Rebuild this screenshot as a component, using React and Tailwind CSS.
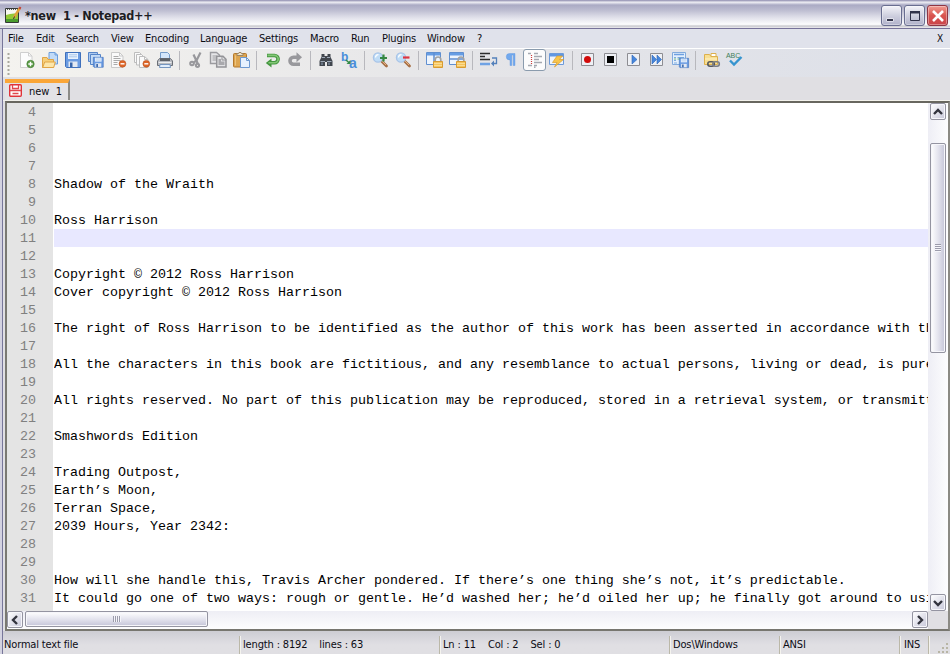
import clsx from "clsx";

const MENU = [
  { label: "File", width: "w-[16px]" },
  { label: "Edit", width: "w-[18px]" },
  { label: "Search", width: "w-[33px]" },
  { label: "View", width: "w-[22px]" },
  { label: "Encoding", width: "w-[43px]" },
  { label: "Language", width: "w-[47px]" },
  { label: "Settings", width: "w-[39px]" },
  { label: "Macro", width: "w-[29px]" },
  { label: "Run", width: "w-[19px]" },
  { label: "Plugins", width: "w-[33px]" },
  { label: "Window", width: "w-[38px]" },
  { label: "?", width: "w-[8px]" },
];

const FIRST_LINE = 4;
const CURRENT_LINE = 11;

const LINES = [
  "",
  "",
  "",
  "",
  "Shadow of the Wraith",
  "",
  "Ross Harrison",
  "",
  "",
  "Copyright © 2012 Ross Harrison",
  "Cover copyright © 2012 Ross Harrison",
  "",
  "The right of Ross Harrison to be identified as the author of this work has been asserted in accordance with th",
  "",
  "All the characters in this book are fictitious, and any resemblance to actual persons, living or dead, is pure",
  "",
  "All rights reserved. No part of this publication may be reproduced, stored in a retrieval system, or transmitt",
  "",
  "Smashwords Edition",
  "",
  "Trading Outpost,",
  "Earth’s Moon,",
  "Terran Space,",
  "2039 Hours, Year 2342:",
  "",
  "",
  "How will she handle this, Travis Archer pondered. If there’s one thing she’s not, it’s predictable.",
  "It could go one of two ways: rough or gentle. He’d washed her; he’d oiled her up; he finally got around to usi",
];

function Svg({ children, className }) {
  return (
    <svg viewBox="0 0 16 16" width="16" height="16" fill="none" className={clsx("block shrink-0 overflow-visible", className)}>
      {children}
    </svg>
  );
}

function Minus({ x, y }) {
  return (
    <>
      <circle cx={x} cy={y} r="3.4" fill="#dd6426" stroke="#b9501c" strokeWidth=".6" />
      <path d={`M${x - 2} ${y}h4`} stroke="#fff" strokeWidth="1.4" />
    </>
  );
}

function Floppy({ x = 0, y = 0, s = 1 }) {
  return (
    <g transform={`translate(${x} ${y}) scale(${s})`}>
      <path d="M.5 .5h15v15h-14l-1-1z" fill="#6b9ce2" stroke="#3f70bb" />
      <path d="M3 1h10v6H3z" fill="#e9f2fd" />
      <path d="M4 2.8h8M4 4.8h8" stroke="#a9c6ea" />
      <path d="M3.5 9.5h9V15h-9z" fill="#e3e9f2" />
      <path d="M5 10.5h2.5V15H5z" fill="#3765ab" />
    </g>
  );
}

function Lock() {
  return (
    <>
      <path d="M8.2 10V7.8a2.8 2.8 0 0 1 5.6 0V10" stroke="#a2a2a2" strokeWidth="1.7" />
      <path d="M6.5 9.5h9v6h-9z" fill="#f5c45c" stroke="#d79b32" />
      <path d="M7 11.5h8M7 13.5h8" stroke="#fbdc92" />
    </>
  );
}

function Magnifier() {
  return (
    <>
      <path d="M8.7 9.2l4.8 4.8" stroke="#a76f45" strokeWidth="2.8" strokeLinecap="round" />
      <path d="M9 9l4 4" stroke="#e3b184" strokeWidth="1" />
      <circle cx="5" cy="5.5" r="4.6" fill="#bfdcf6" stroke="#a8c4e8" strokeWidth="1.3" />
      <path d="M2.5 5.5a3 3 0 0 1 3-2.8" stroke="#fff" strokeWidth="1.2" />
    </>
  );
}

function MacroBox({ children }) {
  return (
    <Svg>
      <g transform="translate(-1 -1)">
        <path d="M1.5 2.5h12v12h-12z" fill="#eef0f5" stroke="#8d8d92" />
        {children}
      </g>
    </Svg>
  );
}

function NewIcon() {
  return (
    <Svg>
      <path d="M1.5 .5h8L13 4v11.5H1.5z" fill="#fcfcfc" stroke="#cfcfcf" />
      <path d="M9.5 .5V4H13" stroke="#cfcfcf" />
      <circle cx="11.5" cy="12" r="3.7" fill="#5c9b48" stroke="#3e7a2d" strokeWidth=".6" />
      <path d="M9.3 12h4.4M11.5 9.8v4.4" stroke="#fff" strokeWidth="1.4" />
    </Svg>
  );
}

function OpenIcon() {
  return (
    <Svg>
      <path d="M7 .5h6L15.5 3v9H7z" fill="#c1dbf8" stroke="#6b9ddb" />
      <path d="M13 .5V3h2.5" stroke="#6b9ddb" />
      <path d="M.5 5.5H5l1 2h5.5v8H.5z" fill="#f6cf79" stroke="#e0a546" />
      <path d="M.7 15.5L2.7 10h10.6l-1.6 5.5z" fill="#fce6aa" stroke="#e0a546" />
    </Svg>
  );
}

function SaveAllIcon() {
  return (
    <Svg>
      <path d="M.5 .5h9v9h-9z" fill="#acc9ee" stroke="#5685c8" />
      <path d="M2.5 2.5h10v10h-10z" fill="#c5dcf6" stroke="#5685c8" />
      <Floppy x={5} y={5} s={0.66} />
    </Svg>
  );
}

function CloseIcon() {
  return (
    <Svg>
      <path d="M.5 .5h8L12 4v11.5H.5z" fill="#fafafa" stroke="#c9c9c9" />
      <path d="M8.5 .5V4H12" stroke="#c9c9c9" />
      <path d="M2.5 4.5h5M2.5 6.5h7M2.5 8.5h7M2.5 10.5h4M2.5 12.5h4" stroke="#aaa" />
      <Minus x={11.5} y={11.8} />
    </Svg>
  );
}

function CloseAllIcon() {
  return (
    <Svg>
      <path d="M.5 .5h5L8 3v7.5H.5z" fill="#fafafa" stroke="#bdbdbd" />
      <path d="M2.5 2.5h5L10 5v8H2.5z" fill="#fafafa" stroke="#bdbdbd" />
      <path d="M5.5 4.5h5l3.5 3v8H5.5z" fill="#fafafa" stroke="#bdbdbd" />
      <path d="M10.5 4.5v3H14" stroke="#bdbdbd" />
      <Minus x={12.3} y={11.8} />
    </Svg>
  );
}

function PrintIcon() {
  return (
    <Svg>
      <path d="M3.5 7.5v-7h7l2 2v5" fill="#d4e6fb" stroke="#759bc9" />
      <path d="M2.5 6.5h11l2 2.5v4.5H.5V9z" fill="#b9bcc2" stroke="#6b6f76" />
      <path d="M3 6.5h10V9H3z" fill="#5d6168" />
      <path d="M1.5 10.5h13" stroke="#eceef0" />
      <path d="M3 12.5h10l.5 3h-11z" fill="#e0edfc" stroke="#7595bf" />
    </Svg>
  );
}

function CutIcon() {
  return (
    <Svg>
      <path d="M5.5 2.5L9 10M12.5 .5L8 9.5" stroke="#98989c" strokeWidth="2.2" />
      <path d="M8 8.5L5.5 11M8.5 9l1.5 3" stroke="#98989c" strokeWidth="2.2" />
      <circle cx="4" cy="11.5" r="1.8" stroke="#98989c" strokeWidth="2" />
      <circle cx="9.5" cy="13.3" r="1.6" stroke="#98989c" strokeWidth="2" />
    </Svg>
  );
}

function CopyIcon() {
  return (
    <Svg>
      <path d="M-.5 .5h6L8.500 3v8.500h-9z" fill="#e6e6e8" stroke="#9b9b9f" strokeWidth="1.4" />
      <path d="M1.5 4h4M1.5 6h4M1.5 8h4" stroke="#9b9b9f" />
      <path d="M5.7 4.2H12l3 3v7.8H5.7z" fill="#e2e2e4" stroke="#949498" strokeWidth="1.5" />
      <path d="M11 4.500V8h4" stroke="#949498" />
      <path d="M7.5 7h2.500v2.500h3.500V13h-6z" fill="#a9a9ad" />
    </Svg>
  );
}

function PasteIcon() {
  return (
    <Svg>
      <rect x="-.5" y="1.5" width="13" height="13.5" rx="1" fill="#dda550" stroke="#b4782c" />
      <path d="M1.5 3.5v10" stroke="#edc47e" />
      <path d="M3 3.5v-2h1.500l.5-1h2l.5 1H9v2z" fill="#eee3cc" stroke="#9e8560" />
      <path d="M6.5 5.5h6l3 3v7h-9z" fill="#e6f1fe" stroke="#6c98d0" />
      <path d="M12.5 5.5v3h3" stroke="#6c98d0" />
    </Svg>
  );
}

function UndoIcon() {
  return (
    <Svg>
      <path d="M2 3.5h7.5a3.6 3.6 0 0 1 0 7.200H6" stroke="#43963e" strokeWidth="3.6" />
      <path d="M6.5 6.500v9L.8 11z" fill="#43963e" />
      <path d="M2.5 3.4h7a3.7 3.7 0 0 1 0 7.400H3.500" stroke="#83c777" strokeWidth="1.6" />
    </Svg>
  );
}

function RedoIcon() {
  return (
    <Svg>
      <path d="M10.500 5.300H5.500a3.500 3.500 0 0 0 0 7H12" stroke="#98989c" strokeWidth="3.600" />
      <path d="M8.500 .3v10l5.500-5z" fill="#98989c" />
    </Svg>
  );
}

function FindIcon() {
  return (
    <Svg>
      <g transform="translate(-.5 0)">
        <path d="M3 2h3v2h3V2h3v3l2 4v5H8.500v-4h-2v4H1V9l2-4z" fill="#41464e" />
        <path d="M2 9.500h4.500M8.500 9.500H13M3.500 5.500h3M8.500 5.500h3" stroke="#9faab8" />
        <path d="M3.500 10.500V13M10.500 10.500V13" stroke="#788596" strokeWidth="1.5" />
      </g>
    </Svg>
  );
}

function ReplaceIcon() {
  return (
    <Svg>
      <text x="-1" y="9" fill="#4a8edb" fontSize="12" fontWeight="bold" fontFamily="Liberation Sans, sans-serif">
        b
      </text>
      <text x="7" y="15.5" fill="#4a8edb" fontSize="14" fontWeight="bold" fontFamily="Liberation Sans, sans-serif">
        a
      </text>
      <path d="M4 8l4 3.5" stroke="#348a48" strokeWidth="1.5" />
      <path d="M8.5 8v4h-4z" fill="#348a48" />
    </Svg>
  );
}

function SyncIcon({ vertical }) {
  return (
    <Svg>
      <path d="M-.5 .5h14v12h-14z" fill="#edf4fd" stroke="#608fd0" />
      <path d="M0 1h13v2.500H0z" fill="#669de4" />
      {vertical ? (
        <path d="M7 1v11" stroke="#608fd0" strokeWidth="1.5" />
      ) : (
        <path d="M0 7h13" stroke="#608fd0" strokeWidth="1.5" />
      )}
      <Lock />
    </Svg>
  );
}

function WrapIcon() {
  return (
    <Svg>
      <path d="M-1 1.500h10M-1 4.500h5M-1 7.500h10" stroke="#2d2d2d" strokeWidth="1.4" />
      <path d="M-1 12h10" stroke="#6fa2e4" strokeWidth="2.500" />
      <path d="M11 6h4.500v5.500H12" stroke="#5481bb" strokeWidth="1.300" />
      <path d="M13 8.500v6l-3-3z" fill="#5481bb" />
    </Svg>
  );
}

function PilcrowIcon() {
  return (
    <Svg>
      <path d="M11 1.500H5.500a3 3 0 0 0 0 6.400H6v5.600h1.800V3h1.400v10.500H11z" fill="#72a9ee" stroke="#5b94dd" strokeWidth=".4" />
    </Svg>
  );
}

function IndentIcon() {
  return (
    <Svg>
      <path
        d="M0 1.500h3M6 1.500h4M6 4.500h8M6 7.500h5M6 10.500h8M0 13.500h4M6 13.500h3M6 15.300h1.500"
        stroke="#a5a9b1"
        strokeWidth="1.4"
      />
      <path d="M3.500 3v9" stroke="#cc3c3c" strokeWidth="1.2" strokeDasharray="1 1" />
    </Svg>
  );
}

function LightningIcon() {
  return (
    <Svg>
      <path d="M-.5 1.500h14v11h-14z" fill="#eef4fc" stroke="#6c9ada" />
      <path d="M0 2h13v2.500H0z" fill="#6097e2" />
      <path d="M7 4h5.500L9.500 7.500h4L4.500 15l2.500-4.500H2.500z" fill="#f8c54b" stroke="#d99b2c" strokeWidth=".7" />
    </Svg>
  );
}

function SaveMacroIcon() {
  return (
    <Svg>
      <path d="M-.5 .5h13v12h-13z" fill="#e4effc" stroke="#82aadc" />
      <path d="M1 2.500h10" stroke="#6e9fe0" strokeWidth="1.500" />
      <path d="M1 5.500h2M4.500 5.500H11M1 8.500h2M1 11h3" stroke="#7eabdf" />
      <path d="M1 7h2M4.500 7H9" stroke="#78ba7d" />
      <Floppy x={6} y={6} s={0.62} />
    </Svg>
  );
}

function FolderLinkIcon() {
  return (
    <Svg>
      <path d="M.5 2.500h5l1.500 2h6.500v8H.5z" fill="#f8df93" stroke="#ddb04c" />
      <path d="M7 1.500h5v3H7z" fill="#fff" stroke="#ddb04c" />
      <path d="M1 7h12" stroke="#fff2c4" />
      <rect x="3.8" y="9.800" width="6.5" height="4.400" rx="2.200" stroke="#55585d" strokeWidth="1.600" />
      <rect x="8.8" y="9.800" width="6.5" height="4.400" rx="2.200" stroke="#7b7e83" strokeWidth="1.600" />
    </Svg>
  );
}

function SpellIcon() {
  return (
    <Svg>
      <text x="-1" y="5.500" fill="#3f7f59" fontSize="7" fontFamily="Liberation Sans, sans-serif" textLength="14">
        ABC
      </text>
      <path d="M3 8.500l4 4 7.500-7.500" stroke="#3694cf" strokeWidth="2.400" />
    </Svg>
  );
}

const TOOLBAR = [
  [<NewIcon />, <OpenIcon />, <Svg><Floppy /></Svg>, <SaveAllIcon />, <CloseIcon />, <CloseAllIcon />, <PrintIcon />],
  [<CutIcon />, <CopyIcon />, <PasteIcon />],
  [<UndoIcon />, <RedoIcon />],
  [<FindIcon />, <ReplaceIcon />],
  [
    <Svg>
      <Magnifier />
      <path d="M7 6h7M10.500 2.500v7" stroke="#368843" strokeWidth="2.200" />
    </Svg>,
    <Svg>
      <Magnifier />
      <path d="M7 5.500h6.500" stroke="#dd3341" strokeWidth="2.200" />
    </Svg>,
  ],
  [<SyncIcon vertical />, <SyncIcon />],
  [<WrapIcon />, <PilcrowIcon />, <IndentIcon />, <LightningIcon />],
  [
    <MacroBox><circle cx="7.5" cy="8.5" r="3.5" fill="#d10a0a" /></MacroBox>,
    <MacroBox><path d="M4 5h7v7H4z" fill="#000" /></MacroBox>,
    <MacroBox><path d="M6 4l5 4.500L6 13z" fill="#4686dc" stroke="#2b65b7" strokeWidth=".6" /></MacroBox>,
    <MacroBox><path d="M3 4l4.500 4.500L3 13zM8 4l4.500 4.500L8 13z" fill="#4686dc" stroke="#2b65b7" strokeWidth=".6" /></MacroBox>,
    <SaveMacroIcon />,
  ],
  [<FolderLinkIcon />, <SpellIcon />],
];

// index of the pressed toggle inside its toolbar group
const PRESSED = { group: 6, item: 2 };

function WindowButton({ close, children }) {
  return (
    <div
      className={clsx(
        "flex h-[21px] w-[21px] items-center justify-center rounded-[3px] border shadow-[inset_0_0_0_1px_rgba(255,255,255,0.35)]",
        close
          ? "border-[#8f3643] bg-linear-to-b from-[#ef9a91] via-[#d9544f] to-[#c9444a]"
          : "border-[#696e90] bg-linear-to-b from-[#f4f4f9] via-[#cfd0df] to-[#b0b1ca]"
      )}
    >
      {children}
    </div>
  );
}

function TitleBar() {
  return (
    <div className="flex h-[29px] shrink-0 items-center border-b border-[#77739a] bg-[linear-gradient(180deg,#9a98b8_0px,#aaa9c2_1px,#f0f0f5_2px,#dddde8_3px,#aaaac4_5px,#bcbcd0_10px,#dedee8_17px,#fbfbfd_24px,#f5f5f7_25px,#bdbdc3_26px,#e4e3e8_27px,#e4e3e8_28px)] pt-[3px] pr-[2px] pl-[5px]">
      <Svg className="mb-[2px]">
        <path d="M.5 1.500h13v14H.5z" fill="#f7f8f1" stroke="#343936" />
        <path d="M1 8l4-1 8-1v9H1z" fill="#92c936" />
        <path d="M1 12h12v3H1z" fill="#4b9c2e" />
        <path d="M2 2.500h11" stroke="#555" strokeDasharray="1 1" />
        <path d="M14.800 1L9 10.500" stroke="#e0a23a" strokeWidth="2.400" />
        <path d="M15.500 0l-1 2" stroke="#c44038" strokeWidth="2" />
        <path d="M9.500 9.500l-1 2.500" stroke="#333" />
      </Svg>
      <span className="ml-[4px] w-[300px] font-['DejaVu_Sans_Condensed','DejaVu_Sans',sans-serif] text-[12.5px] font-bold tracking-[-0.28px] whitespace-pre text-[#1d1d24]">
        *new  1 - Notepad++
      </span>
      <div className="ml-auto flex gap-[2px]">
        <WindowButton>
          <Svg>
            <path d="M2.500 10.500h7v3h-7z" fill="#fff" />
            <path d="M3 11h6v2H3z" fill="#34364c" />
          </Svg>
        </WindowButton>
        <WindowButton>
          <Svg>
            <path d="M3.500 3.500h9v9h-9z" stroke="#30324a" />
            <path d="M3 3h10v2.500H3z" fill="#30324a" />
          </Svg>
        </WindowButton>
        <WindowButton close>
          <Svg>
            <path d="M3 3l10 10M13 3L3 13" stroke="#fff" strokeWidth="2.600" />
          </Svg>
        </WindowButton>
      </div>
    </div>
  );
}

function MenuBar() {
  return (
    <div className="flex h-[19px] shrink-0 items-center gap-[12px] bg-[#e0e2eb] pr-[7px] pl-[5px]">
      {MENU.map((m) => (
        <span key={m.label} className={clsx("whitespace-nowrap", m.width)}>
          {m.label}
        </span>
      ))}
      <span className="ml-auto text-[10px]">X</span>
    </div>
  );
}

function Toolbar() {
  return (
    <div className="flex h-[29px] shrink-0 items-center border-t border-white bg-linear-to-r from-[#f4f3ef] via-[#e5e5e8] to-[#dde0e9] pb-[6px] pl-[4px]">
      <svg width="8" height="24" className="mt-[6px] block shrink-0">
        <path d="M1.500 2v22" stroke="#a9a89e" strokeWidth="2" strokeDasharray="2 2" />
      </svg>
      {TOOLBAR.map((group, g) => (
        <div key={g} className="flex items-center">
          {g > 0 && (
            <div className="flex w-2 pl-[3px]">
              <div className="h-[19px] w-px bg-[#b8b8bd]" />
            </div>
          )}
          {group.map((icon, i) => (
            <div
              key={i}
              className={clsx(
                "flex h-[22px] w-[23px] items-center",
                g === PRESSED.group && i === PRESSED.item
                  ? "rounded-[3px] border border-[#8a9bad] bg-[#fcfcfc] pl-[4px]"
                  : "pl-[4px]"
              )}
            >
              {icon}
            </div>
          ))}
        </div>
      ))}
    </div>
  );
}

function TabBar() {
  return (
    <div className="flex h-[24px] shrink-0 items-end border-b border-[#f3f2ec] bg-[#e0dfe3] pl-[2px]">
      <div className="flex h-[21px] w-[65px] items-center border-t-[4px] border-r-2 border-t-[#faa638] border-r-[#8c8b88] bg-[#e3e2e6] pl-[4px]">
        <svg width="13" height="13" viewBox="0 0 13 13" className="mb-[2px] block shrink-0">
          <rect x=".7" y=".7" width="11.6" height="11.6" rx="1" fill="#fff" stroke="#e0333a" strokeWidth="1.4" />
          <path d="M3.500 1v3.500h6V1M1 6.500h11M3.500 9.500h6" fill="none" stroke="#e0474d" strokeWidth="1.300" />
        </svg>
        <span className="ml-[7px] tracking-normal whitespace-pre">new  1</span>
      </div>
    </div>
  );
}

function Arrow({ d }) {
  return (
    <svg width="10" height="10" viewBox="0 0 10 10" className="block shrink-0">
      <path d={d} fill="none" stroke="#33343e" strokeWidth="2.400" />
    </svg>
  );
}

const SCROLL_BUTTON =
  "flex h-[17px] w-[16px] shrink-0 items-center justify-center rounded-[2px] border border-[#9494a1] bg-linear-to-br from-white to-[#c8c8da] shadow-[inset_0_0_0_1px_#f6f6fa]";

function Editor() {
  return (
    <div className="ml-[2px] flex h-[530px] shrink-0 flex-col border-2 border-t-[#68675f] border-r-[#8b8a84] border-b-[#77766f] border-l-[#7a7972] bg-white">
      <div className="flex h-[508px] shrink-0">
        <div className="min-w-0 flex-1 overflow-hidden font-['Liberation_Mono',monospace] text-[13.333px] leading-[18px] tracking-normal">
          {LINES.map((text, i) => {
            const n = FIRST_LINE + i;
            return (
              <div key={n} className="flex h-[18px]">
                <div className="h-[18px] w-[46px] shrink-0 bg-[#e4e4e4] pt-px pr-[17px] text-right text-[#808080]">{n}</div>
                <div
                  className={clsx(
                    "ml-px min-w-0 flex-1 overflow-hidden pt-px whitespace-pre text-black",
                    n === CURRENT_LINE && "bg-[#e8e8ff]"
                  )}
                >
                  {text}
                </div>
              </div>
            );
          })}
          <div className="h-[4px] w-[46px] bg-[#e4e4e4]" />
        </div>
        <div className="flex w-[20px] shrink-0 flex-col items-end bg-linear-to-r from-[#eeeef5] to-[#fdfdfe] pr-[2px]">
          <div className={SCROLL_BUTTON}>
            <Arrow d="M1 7l4-4 4 4" />
          </div>
          <div className="mt-[23px] flex h-[210px] w-[16px] items-center justify-center rounded-[2px] border border-[#9494a1] bg-linear-to-r from-white via-[#e4e4ee] to-[#c5c5d8] shadow-[inset_0_0_0_1px_#f6f6fa]">
            <div className="h-[8px] w-[6px] bg-[repeating-linear-gradient(180deg,#9c9cac_0px,#9c9cac_1px,#f5f5fa_1px,#f5f5fa_2px)]" />
          </div>
          <div className={clsx(SCROLL_BUTTON, "mt-auto")}>
            <Arrow d="M1 3l4 4 4-4" />
          </div>
        </div>
      </div>
      <div className="flex h-[18px] shrink-0 items-start bg-linear-to-b from-[#eeeef5] to-[#fdfdfe]">
        <div className={SCROLL_BUTTON}>
          <Arrow d="M7 1L3 5l4 4" />
        </div>
        <div className="ml-[2px] flex h-[16px] w-[183px] items-center justify-center rounded-[2px] border border-[#9494a1] bg-linear-to-b from-white via-[#e4e4ee] to-[#c5c5d8] shadow-[inset_0_0_0_1px_#f6f6fa]">
          <div className="h-[6px] w-[8px] bg-[repeating-linear-gradient(90deg,#9c9cac_0px,#9c9cac_1px,#f5f5fa_1px,#f5f5fa_2px)]" />
        </div>
        <div className={clsx(SCROLL_BUTTON, "ml-auto")}>
          <Arrow d="M3 1l4 4-4 4" />
        </div>
        <div className="h-full w-[20px] bg-[#e0dfe3]" />
      </div>
    </div>
  );
}

const STATUS = [
  { text: "Normal text file", cell: "w-[237px] pl-px" },
  { text: "length : 8192    lines : 63", cell: "w-[200px] pl-[3px]" },
  { text: "Ln : 11    Col : 2    Sel : 0", cell: "w-[230px] pl-[3px]" },
  { text: "Dos\\Windows", cell: "w-[110px] pl-[3px]" },
  { text: "ANSI", cell: "w-[120px] pl-[3px]" },
  { text: "INS", cell: "w-[29px] pl-[4px]" },
];

function StatusBar() {
  return (
    <div className="flex h-[23px] shrink-0 items-center bg-linear-to-b from-[#cdcdd3] via-[#dddce1] to-[#e0dfe3] to-60% pt-[4px]">
      {STATUS.map((s) => (
        <div
          key={s.text}
          className={clsx("flex h-[18px] shrink-0 items-center border-r border-[#bbb8a8] shadow-[1px_0_0_#f4f3ee]", s.cell)}
        >
          <span className="tracking-[-0.15px] whitespace-pre">{s.text}</span>
        </div>
      ))}
      <svg width="12" height="12" viewBox="0 0 12 12" className="mt-auto ml-auto block">
        <path d="M8 1h2v2H8zM8 5h2v2H8zM8 9h2v2H8zM4 5h2v2H4zM4 9h2v2H4zM0 9h2v2H0z" fill="#b8b5a5" />
      </svg>
    </div>
  );
}

export default function App() {
  return (
    <div className="flex h-[654px] w-[950px] flex-col overflow-hidden bg-[#e0dfe3] font-['DejaVu_Sans_Condensed','DejaVu_Sans',sans-serif] text-[11px] leading-[14px] tracking-[-0.2px] text-[#0c0c14]">
      <TitleBar />
      <div className="flex flex-1 bg-[#d3d2e0] pl-[2px]">
        <div className="flex min-w-0 flex-1 flex-col border-l border-[#77769a] bg-[#e0dfe3]">
          <MenuBar />
          <Toolbar />
          <TabBar />
          <Editor />
          <StatusBar />
        </div>
      </div>
    </div>
  );
}
